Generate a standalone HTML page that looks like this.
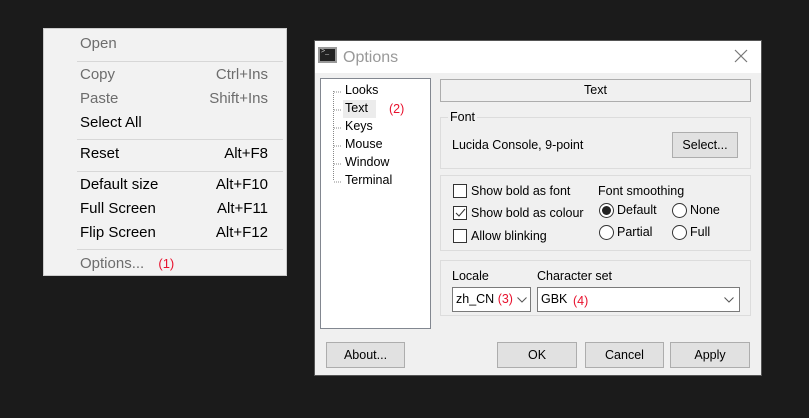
<!DOCTYPE html>
<html><head><style>
*{margin:0;padding:0;box-sizing:border-box}
body{width:809px;height:418px;background:#1b1b1b;position:relative;overflow:hidden;font-family:"Liberation Sans","Noto Sans CJK SC",sans-serif;font-size:12px;color:#000}
.a{position:absolute}
.menu{left:43px;top:28px;width:244px;height:248px;background:#f2f2f2;border:1px solid #ccc;font-size:15px}
.mi{position:absolute;left:36px;right:18px;height:24px;line-height:24px}
.mi span{position:absolute;right:0;top:0}
.dis{color:#6d6d6d}
.sep{position:absolute;left:33px;right:3px;height:1px;background:#d7d7d7}
.dlg{left:314px;top:40px;width:448px;height:336px;background:#f0f0f0;border:1px solid #555}
.btn{position:absolute;background:#e1e1e1;border:1px solid #adadad;text-align:center;font-size:12.5px}
.grp{position:absolute;border:1px solid #dcdcdc}
.cb{position:absolute;width:14px;height:14px;border:1px solid #333;background:#fff}
.rb{position:absolute;width:15px;height:15px;border:1px solid #333;border-radius:50%;background:#fff}
.t{position:absolute;font-size:12.5px;white-space:nowrap}
.red{color:#e8112d}
.combo{position:absolute;background:#fff;border:1px solid #7a7a7a;height:25px}
</style></head><body>
<div class="a menu">
<div class="mi dis" style="top:3px">Open</div>
<div class="sep" style="top:32px"></div>
<div class="mi dis" style="top:34px">Copy<span>Ctrl+Ins</span></div>
<div class="mi dis" style="top:58px">Paste<span>Shift+Ins</span></div>
<div class="mi" style="top:82px">Select All</div>
<div class="sep" style="top:110px"></div>
<div class="mi" style="top:113px">Reset<span>Alt+F8</span></div>
<div class="sep" style="top:142px"></div>
<div class="mi" style="top:144px">Default size<span>Alt+F10</span></div>
<div class="mi" style="top:168px">Full Screen<span>Alt+F11</span></div>
<div class="mi" style="top:192px">Flip Screen<span>Alt+F12</span></div>
<div class="sep" style="top:220px"></div>
<div class="mi dis" style="top:223px">Options... <span style="position:static;margin-left:10px;font-size:13px" class="red">(1)</span></div>
</div>

<div class="a dlg">
<div class="a" style="left:0;top:0;width:446px;height:32px;background:#fff"></div>
<div class="a" style="left:3px;top:6px;width:19px;height:16px;background:#222;border:2px solid #999"><div style="color:#ccc;font-size:7px;line-height:6px;padding-left:1px">&gt;_</div></div>
<div class="t" style="left:28px;top:8px;font-size:16px;color:#999">Options</div>
<svg class="a" style="left:419px;top:8px" width="14" height="14"><path d="M1 1L13 13M13 1L1 13" stroke="#777" stroke-width="1.2"/></svg>

<div class="a" style="left:5px;top:37px;width:111px;height:251px;background:#fff;border:1px solid #828790">
<svg class="a" style="left:12px;top:6px" width="20" height="100"><path d="M0.5 6V96M1 7H8M1 25H8M1 43H8M1 61H8M1 79H8M1 97H8" stroke="#888" stroke-dasharray="1 1"/></svg>
<div class="a" style="left:22px;top:21px;width:33px;height:18px;background:#ececec"></div>
<div class="t" style="left:24px;top:4px">Looks</div>
<div class="t" style="left:24px;top:22px">Text</div>
<div class="t red" style="left:68px;top:23px">(2)</div>
<div class="t" style="left:24px;top:40px">Keys</div>
<div class="t" style="left:24px;top:58px">Mouse</div>
<div class="t" style="left:24px;top:76px">Window</div>
<div class="t" style="left:24px;top:94px">Terminal</div>
</div>

<div class="btn" style="left:125px;top:38px;width:311px;height:23px;line-height:21px;background:#f0f0f0;border-color:#adadad">Text</div>

<div class="grp" style="left:125px;top:76px;width:311px;height:52px"></div>
<div class="t" style="left:133px;top:69px;background:#f0f0f0;padding:0 2px">Font</div>
<div class="t" style="left:137px;top:97px">Lucida Console, 9-point</div>
<div class="btn" style="left:357px;top:91px;width:66px;height:26px;line-height:24px">Select...</div>

<div class="grp" style="left:125px;top:134px;width:311px;height:76px"></div>
<div class="cb" style="left:138px;top:143px"></div>
<div class="t" style="left:156px;top:143px">Show bold as font</div>
<div class="cb" style="left:138px;top:165px"><svg width="12" height="12" style="position:absolute;left:0;top:0"><path d="M2 6L5 9L11 2" stroke="#333" fill="none"/></svg></div>
<div class="t" style="left:156px;top:165px">Show bold as colour</div>
<div class="cb" style="left:138px;top:188px"></div>
<div class="t" style="left:156px;top:188px">Allow blinking</div>
<div class="t" style="left:283px;top:143px">Font smoothing</div>
<div class="rb" style="left:284px;top:162px"><div style="position:absolute;left:2px;top:2px;width:9px;height:9px;border-radius:50%;background:#222"></div></div>
<div class="t" style="left:302px;top:162px">Default</div>
<div class="rb" style="left:357px;top:162px"></div>
<div class="t" style="left:375px;top:162px">None</div>
<div class="rb" style="left:284px;top:184px"></div>
<div class="t" style="left:302px;top:184px">Partial</div>
<div class="rb" style="left:357px;top:184px"></div>
<div class="t" style="left:375px;top:184px">Full</div>

<div class="grp" style="left:125px;top:219px;width:311px;height:56px"></div>
<div class="t" style="left:137px;top:228px">Locale</div>
<div class="t" style="left:222px;top:228px">Character set</div>
<div class="combo" style="left:137px;top:246px;width:79px"><div class="t" style="left:3px;top:4px">zh_CN <span class="red">(3)</span></div>
<svg class="a" style="left:64px;top:9px" width="10" height="6"><path d="M0.5 0.5L5 5L9.5 0.5" stroke="#555" fill="none"/></svg></div>
<div class="combo" style="left:222px;top:246px;width:203px"><div class="t" style="left:3px;top:4px">GBK</div><div class="t red" style="left:35px;top:6px">(4)</div>
<svg class="a" style="left:186px;top:9px" width="10" height="6"><path d="M0.5 0.5L5 5L9.5 0.5" stroke="#555" fill="none"/></svg></div>

<div class="btn" style="left:11px;top:301px;width:79px;height:26px;line-height:24px">About...</div>
<div class="btn" style="left:182px;top:301px;width:80px;height:26px;line-height:24px">OK</div>
<div class="btn" style="left:270px;top:301px;width:79px;height:26px;line-height:24px">Cancel</div>
<div class="btn" style="left:355px;top:301px;width:80px;height:26px;line-height:24px">Apply</div>
</div>
</body></html>
